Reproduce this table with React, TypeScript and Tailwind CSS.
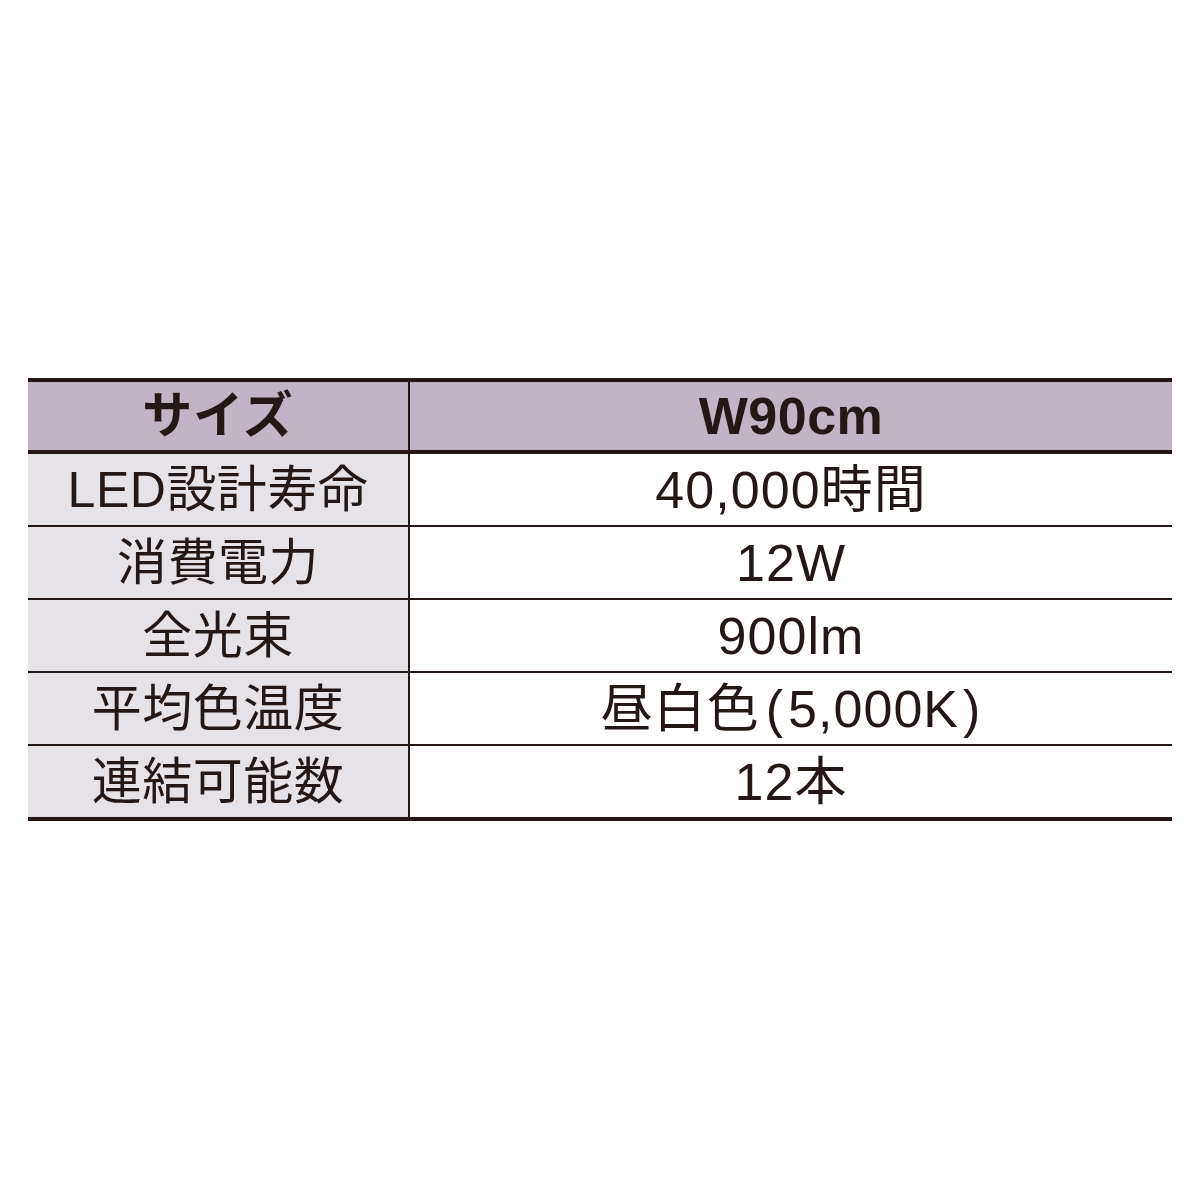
import React from 'react';

const rows: [string, React.ReactNode][] = [
  ['LED設計寿命', '40,000時間'],
  ['消費電力', '12W'],
  ['全光束', '900lm'],
  [
    '平均色温度',
    <>
      昼白色<span className="ml-[6px] mr-[4px]">(</span>5,000K<span className="ml-[4px]">)</span>
    </>,
  ],
  ['連結可能数', '12本'],
];

const font = { fontFamily: "'Liberation Sans', 'Noto Sans CJK JP', sans-serif" };

export default function App() {
  return (
    <div className="w-[1200px] h-[1200px] bg-white px-[28px] pt-[378px]" style={font}>
      <div className="w-[1144px] text-[#231815]">
        <div className="flex h-[76px] border-y-4 border-[#231815] bg-[#c0b5c5]">
          <div className="w-[382px] border-r-2 border-[#231815] flex items-center justify-center text-[50px] font-bold leading-none tracking-[0.02em]">
            サイズ
          </div>
          <div className="flex-1 flex items-center justify-center text-[52px] font-bold leading-none tracking-[0.01em]">
            W90cm
          </div>
        </div>
        {rows.map(([label, value], i) => (
          <div
            key={label}
            className={
              i === rows.length - 1
                ? 'flex h-[75px] border-b-4 border-[#231815]'
                : 'flex h-[73px] border-b-2 border-[#231815]'
            }
          >
            <div className="w-[382px] border-r-2 border-[#231815] bg-[#e5e3e8] flex items-center justify-center text-[50px] leading-none tracking-[0.01em]">
              {label}
            </div>
            <div className="flex-1 flex items-center justify-center text-[52px] leading-none tracking-[0.02em]">
              {value}
            </div>
          </div>
        ))}
      </div>
    </div>
  );
}
